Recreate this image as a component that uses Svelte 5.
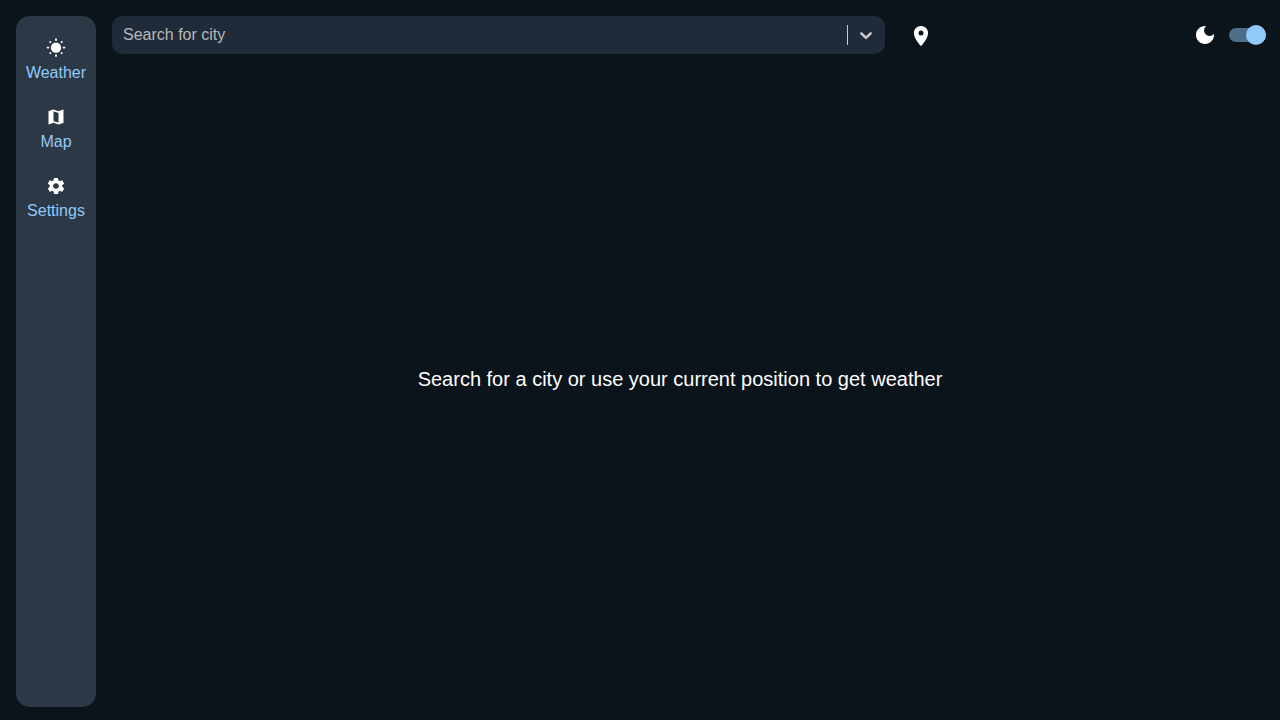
<script>
  let dark = $state(true);
  let city = $state('');
</script>

<div class="shell">
  <nav class="sidebar" aria-label="Main">
    <a class="item" href="#weather">
      <svg viewBox="0 0 20 20" aria-hidden="true">
        <circle cx="10" cy="9.6" r="5.2" fill="currentColor" />
        <g stroke="currentColor" stroke-width="1.8" stroke-linecap="round">
          <path d="M10 1.200v.8M10 17.200v.8M1.6 9.6h.8M17.6 9.6h.8" />
          <path d="M4.2 4l.2 .2M15.6 15l.2 .2M4.2 15.200l.2-.2M15.6 4.200l.2-.2" />
        </g>
      </svg>
      <span>Weather</span>
    </a>
    <a class="item" href="#map">
      <svg viewBox="0 0 512 512" aria-hidden="true">
        <path fill="currentColor" d="M437.333 64c-2.176 0-4.396 1.369-9.176 3.207L320 108.802 192 64 71.469 104.531C67.197 105.604 64 109.864 64 115.197v322.136c0 6.396 4.271 10.667 10.666 10.667 1.828 0 6.505-2.33 9.087-3.319L192 403.197 320 448l120.531-40.531c4.271-1.073 7.469-5.334 7.469-10.667V74.666C448 68.271 443.729 64 437.333 64zM320 405.333l-128-44.802V106.666l128 44.803v253.864z" />
      </svg>
      <span>Map</span>
    </a>
    <a class="item" href="#settings">
      <svg viewBox="0 0 512 512" aria-hidden="true">
        <path fill="currentColor" d="M413.967 276.8c1.06-6.235 1.06-13.518 1.06-20.8s-1.06-13.518-1.06-20.8l44.667-34.318c4.26-3.118 5.319-8.317 2.13-13.518L418.215 115.6c-2.129-4.164-8.507-6.235-12.767-4.164l-53.186 20.801c-10.638-8.318-23.394-15.601-36.16-20.801l-7.448-55.117c-1.06-4.154-5.319-8.318-10.638-8.318h-85.098c-5.318 0-9.577 4.164-10.637 8.318l-8.508 55.117c-12.767 5.2-24.464 12.482-36.171 20.801l-53.186-20.801c-5.319-2.071-10.638 0-12.767 4.164L49.1 187.365c-2.119 4.153-1.061 10.399 2.129 13.518L96.97 235.2c0 7.282-1.06 13.518-1.06 20.8s1.06 13.518 1.06 20.8l-44.668 34.318c-4.26 3.118-5.318 8.317-2.13 13.518L92.721 396.4c2.13 4.164 8.508 6.235 12.767 4.164l53.187-20.801c10.637 8.318 23.394 15.601 36.16 20.801l8.508 55.117c1.069 5.2 5.318 8.318 10.637 8.318h85.098c5.319 0 9.578-4.164 10.638-8.318l8.518-55.117c12.757-5.2 24.464-12.482 36.16-20.801l53.187 20.801c5.318 2.071 10.637 0 12.767-4.164l42.549-71.765c2.129-4.153 1.06-10.399-2.13-13.518l-46.8-34.317zm-158.499 52c-41.489 0-74.46-32.235-74.46-72.8s32.971-72.8 74.46-72.8 74.461 32.235 74.461 72.8-32.972 72.8-74.461 72.8z" />
      </svg>
      <span>Settings</span>
    </a>
  </nav>

  <div class="content">
    <header>
      <div class="search">
        <input type="text" placeholder="Search for city" aria-label="Search for city" bind:value={city} />
        <span class="divider"></span>
        <button class="chevron" type="button" aria-label="Show cities">
          <svg viewBox="0 0 20 20" aria-hidden="true">
            <path fill="currentColor" stroke="currentColor" stroke-width="0.2" d="M4.516 7.548c0.436-0.446 1.043-0.481 1.576 0l3.908 3.747 3.908-3.747c0.533-0.481 1.141-0.446 1.574 0 0.436 0.445 0.408 1.197 0 1.615-0.406 0.418-4.695 4.502-4.695 4.502-0.217 0.223-0.502 0.335-0.787 0.335s-0.57-0.112-0.789-0.335c0 0-4.287-4.084-4.695-4.502s-0.436-1.17 0-1.615z" />
          </svg>
        </button>
      </div>

      <div class="actions">
        <button class="locate" type="button" aria-label="Use current position">
          <svg viewBox="0 0 24 24" aria-hidden="true">
            <path fill="currentColor" fill-rule="evenodd" d="M12 2C8 2 4.900 5 4.900 9C4.900 14.600 12 22.200 12 22.200s7.100-7.600 7.100-13.200C19.100 5 16 2 12 2zM12 6.400a2.500 2.500 0 1 1 0 5a2.500 2.500 0 1 1 0-5z" />
          </svg>
        </button>
        <label class="theme">
          <svg viewBox="0 0 24 24" aria-hidden="true">
            <path fill="currentColor" d="M12 3c-4.97 0-9 4.03-9 9s4.03 9 9 9 9-4.03 9-9c0-.46-.04-.92-.1-1.36-.98 1.37-2.58 2.26-4.4 2.26-2.98 0-5.4-2.42-5.4-5.4 0-1.81.89-3.42 2.26-4.4-.44-.06-.9-.1-1.36-.1z" />
          </svg>
          <input type="checkbox" role="switch" aria-label="Dark mode" bind:checked={dark} />
        </label>
      </div>
    </header>

    <main>
      <p>Search for a city or use your current position to get weather</p>
    </main>
  </div>
</div>

<style>
  :global(body) {
    background: #0b131b;
  }

  .shell {
    box-sizing: border-box;
    display: flex;
    gap: 16px;
    min-height: 100vh;
    padding: 16px 8px 13px 16px;
    background: #0b131b;
    color: #fff;
    font-family: "Liberation Sans", Arial, sans-serif;
    font-size: 16px;
    line-height: 24px;
  }

  .sidebar {
    box-sizing: border-box;
    display: flex;
    flex: 0 0 80px;
    flex-direction: column;
    gap: 22px;
    padding-top: 22px;
    border-radius: 14px;
    background: #2d3846;
  }

  .item {
    display: flex;
    flex-direction: column;
    align-items: center;
    gap: 3px;
    color: #90caf9;
    text-decoration: none;
  }

  .item svg {
    width: 20px;
    height: 20px;
    color: #fff;
  }

  .content {
    display: flex;
    flex: 1;
    flex-direction: column;
    min-width: 0;
  }

  header {
    display: grid;
    grid-template-columns: 2fr 1fr;
  }

  .search {
    display: flex;
    align-items: center;
    height: 38px;
    border-radius: 10px;
    background: #202b3a;
  }

  .search input {
    flex: 1;
    min-width: 0;
    padding: 0 11px;
    border: 0;
    outline: 0;
    background: none;
    color: #fff;
    font: inherit;
  }

  .search input::placeholder {
    color: #b8b8b8;
    opacity: 1;
  }

  .divider {
    width: 1px;
    height: 20px;
    background: #ccc;
  }

  button {
    display: flex;
    padding: 8px;
    border: 0;
    background: none;
    color: #fff;
    cursor: pointer;
  }

  .chevron {
    padding: 8px 9px 8px 8px;
    color: #ccc;
  }

  .chevron svg {
    width: 20px;
    height: 20px;
  }

  .actions {
    display: flex;
    align-items: center;
    justify-content: space-between;
    padding: 0 6px 0 16px;
  }

  .actions svg {
    width: 24px;
    height: 24px;
  }

  .locate {
    padding: 8px 8px 6px;
  }

  .theme {
    display: flex;
    align-items: center;
    gap: 12px;
  }

  .theme input {
    appearance: none;
    display: flex;
    align-items: center;
    width: 37px;
    height: 14px;
    margin: 0;
    border-radius: 7px;
    background: #4e6d89;
    cursor: pointer;
  }

  .theme input::before {
    content: "";
    width: 20px;
    height: 20px;
    flex: none;
    border-radius: 50%;
    background: #90caf9;
  }

  .theme input:checked::before {
    margin-left: auto;
  }

  main {
    display: flex;
    flex: 1;
    align-items: center;
    justify-content: center;
    padding: 0 24px 4px 0;
  }

  p {
    margin: 0;
    font-size: 20px;
    line-height: 32px;
  }
</style>
